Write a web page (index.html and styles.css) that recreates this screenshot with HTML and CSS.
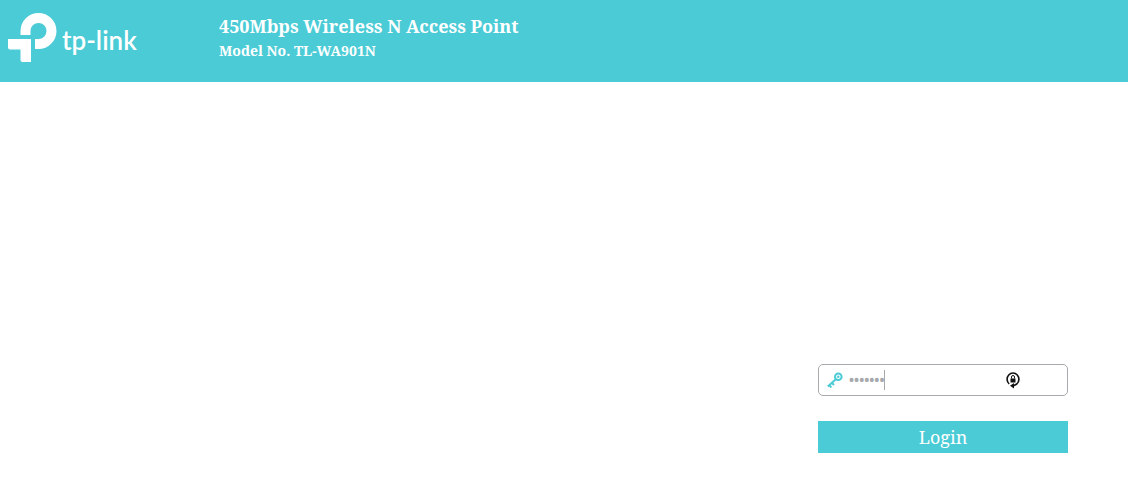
FILE: index.html
```html
<!DOCTYPE html>
<html lang="en">
<head>
<meta charset="utf-8">
<title>TL-WA901N</title>
<meta name="viewport" content="width=device-width, initial-scale=1">
<link rel="stylesheet" href="styles.css">
</head>
<body>
<header class="banner">
  <div class="brand">
    <svg class="brand-mark" viewBox="0 0 49 49" aria-hidden="true">
      <path d="M12.500 22V18a18 18 0 1 1 18 18H27V26H30.500A8 8 0 1 0 22.500 18V22Z"/>
      <path d="M0 26H23V49H14.500Q12.500 49 12.500 47V36.500H2Q0 36.500 0 34.500Z"/>
    </svg>
    <span class="brand-name">tp-link</span>
  </div>
  <div class="product">
    <h1 class="product-name">450Mbps Wireless N Access Point</h1>
    <p class="product-model">Model No. TL-WA901N</p>
  </div>
</header>
<main class="content">
  <form class="login">
    <div class="field">
      <svg class="key-icon" viewBox="0 0 16 16" aria-hidden="true">
        <circle cx="11.300" cy="4.700" r="3.300"/>
        <circle class="key-hole" cx="11.300" cy="4.700" r="1.200"/>
        <path d="M8.800 7.200L0.800 14.500M5 11L7 13M2.200 13.200L4.400 15.400"/>
      </svg>
      <div class="entry">
        <input class="password" type="password" value="1234567" aria-label="Password">
        <span class="caret"></span>
      </div>
      <svg class="lock-icon" viewBox="0 0 14 18" aria-hidden="true">
        <path class="ring" d="M3.200 13A5.900 6.200 0 1 1 10.800 13L7.500 14.800"/>
        <path class="arrow" d="M8 12V17.500L4 14.700Z"/>
        <rect class="arrow" x="4.500" y="7.500" width="5" height="4"/>
        <path class="shackle" d="M5.500 7.500V6a1.500 1.500 0 0 1 3 0V7.500"/>
      </svg>
    </div>
    <button class="submit" type="submit">Login</button>
  </form>
</main>
</body>
</html>
```
FILE: styles.css
```css
* {
  box-sizing: border-box;
}

body {
  margin: 0;
  background: #fff;
  font-family: "Noto Serif", "Droid Serif", "Liberation Serif", serif;
}

.banner {
  display: flex;
  align-items: flex-start;
  padding: 13px 8px 20px;
  background: #4acbd6;
  color: #fff;
}

.brand {
  display: flex;
  gap: 5px;
  width: 211px;
}

.brand-mark {
  width: 49px;
  height: 49px;
  fill: #fff;
}

.brand-name {
  padding-top: 12px;
  font: 600 26px/30px Lato, sans-serif;
}

.product-name {
  margin: 0;
  font-size: 18px;
  line-height: 26px;
}

.product-model {
  margin: 2px 0 0;
  font-size: 14px;
  font-weight: 700;
  line-height: 20px;
}

.content {
  display: flex;
  justify-content: flex-end;
  padding: 282px 60px 28px;
}

.login {
  display: flex;
  flex-direction: column;
  gap: 25px;
  width: 250px;
}

.field {
  display: flex;
  align-items: center;
  height: 32px;
  padding: 0 47px 0 8px;
  border: 1px solid #a7a9ac;
  border-radius: 5px;
  background: #fff;
}

.key-icon {
  width: 16px;
  height: 16px;
  fill: none;
  stroke: #4acbd6;
  stroke-width: 2;
}

.key-hole {
  fill: #4acbd6;
  stroke: none;
}

.entry {
  position: relative;
  flex: 1;
  min-width: 0;
  padding-left: 6px;
}

.password {
  display: block;
  width: 100%;
  height: 20px;
  padding: 0;
  border: 0;
  outline: 0;
  background: transparent;
  color: #a7a9ac;
  font: 14px/20px "Noto Serif", "Droid Serif", "Liberation Serif", serif;
}

.caret {
  position: absolute;
  top: 0;
  left: 41px;
  width: 1px;
  height: 20px;
  background: #a7a9ac;
}

.lock-icon {
  width: 14px;
  height: 18px;
}

.ring {
  fill: none;
  stroke: #111;
  stroke-width: 1.6;
}

.arrow {
  fill: #111;
}

.shackle {
  fill: none;
  stroke: #111;
}

.submit {
  height: 32px;
  padding: 0;
  border: 0;
  background: #4acbd6;
  color: #fff;
  font: 18px/32px "Noto Serif", "Droid Serif", "Liberation Serif", serif;
}
```
